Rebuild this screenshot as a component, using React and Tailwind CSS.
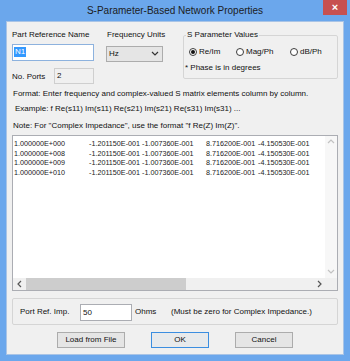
import React from "react";

const rows = ["1.000000E+000", "1.000000E+008", "1.000000E+009", "1.000000E+010"];

function Chevron({ dir, color }) {
  const d = {
    up: "M1 5 L4 2 L7 5",
    down: "M1 2 L4 5 L7 2",
    left: "M5 1 L2 4 L5 7",
    right: "M3 1 L6 4 L3 7",
  }[dir];
  return (
    <svg width="8" height="8" viewBox="0 0 8 8">
      <path d={d} fill="none" stroke={color} strokeWidth="1.2" />
    </svg>
  );
}

function Radio({ label, checked, width }) {
  return (
    <div className={`flex items-center ${width}`}>
      <span className="w-[8px] h-[8px] rounded-full border border-[#3c3c3c] bg-white flex items-center justify-center">
        {checked && <span className="w-[4px] h-[4px] rounded-full bg-[#111]" />}
      </span>
      <span className="ml-[2px]">{label}</span>
    </div>
  );
}

export default function App() {
  return (
    <div className="w-[350px] h-[361px] bg-[#6ba7ec] flex flex-col font-[family-name:'Liberation_Sans',Arial,sans-serif] text-[8px] text-[#111]">
      {/* title bar */}
      <div className="relative h-[21px] flex items-center justify-center">
        <span className="text-[10px] text-[#1c1c1c]">S-Parameter-Based Network Properties</span>
        <div className="absolute top-0 right-[3px] w-[24px] h-[15px] bg-[#c75050] flex items-center justify-center text-white text-[11px] font-bold leading-none">
          ×
        </div>
      </div>

      {/* client area */}
      <div className="mx-[6px] h-[334px] border border-[#a9c4e6] bg-[#f0f0f0] flex flex-col px-[5px] pt-[8px]">
        {/* top controls */}
        <div className="h-[54px] flex items-start">
          <div className="w-[82px] flex flex-col">
            <div className="leading-[9px] whitespace-nowrap">Part Reference Name</div>
            <div className="mt-[5px] h-[17px] border border-[#8db2de] bg-white flex items-start pl-[1px] pt-[1px]">
              <span className="mt-[1px] h-[10px] leading-[10px] px-[1px] bg-[#3399ff] text-white">N1</span>
            </div>
            <div className="mt-[7px] h-[16px] flex items-center">
              <span className="w-[42px] pt-[1px]">No. Ports</span>
              <div className="w-[40px] h-[16px] border border-[#cfcfcf] bg-[#f0f0f0] pl-[2px] pt-[2px] leading-[9px]">2</div>
            </div>
          </div>

          <div className="ml-[12px] w-[57px] flex flex-col">
            <div className="leading-[9px] pl-[1px] whitespace-nowrap">Frequency Units</div>
            <div className="mt-[7px] h-[16px] border border-[#acacac] bg-[#e5e5e5] flex items-center justify-between pl-[2px] pr-[3px]">
              <span>Hz</span>
              <Chevron dir="down" color="#333" />
            </div>
          </div>

          <fieldset className="ml-auto w-[155px] h-[49px] border border-[#d5d5d5] rounded-[2px] pl-[2px]">
            <legend className="px-[1px] leading-[10px]">S Parameter Values</legend>
            <div className="mt-[7px] pl-[3px] flex items-center leading-[10px]">
              <Radio label="Re/Im" checked width="w-[47px]" />
              <Radio label="Mag/Ph" width="w-[54px]" />
              <Radio label="dB/Ph" width="" />
            </div>
            <div className="mt-[6px] -ml-[1px] leading-[10px]">* Phase is in degrees</div>
          </fieldset>
        </div>

        {/* instructions */}
        <div className="mt-[5px] leading-[9px] pl-[1px] whitespace-nowrap">
          Format: Enter frequency and complex-valued S matrix elements column by column.
        </div>
        <div className="mt-[6px] leading-[9px] pl-[3px] whitespace-nowrap">
          Example: f Re(s11) Im(s11) Re(s21) Im(s21) Re(s31) Im(s31) ...
        </div>
        <div className="mt-[8px] leading-[9px] pl-[1px] whitespace-nowrap">
          Note: For "Complex Impedance", use the format "f Re(Z) Im(Z)".
        </div>

        {/* data list */}
        <div className="mt-[5px] h-[156px] border border-[#abadb3] bg-white flex flex-col">
          <div className="flex-1 flex">
            <div className="flex-1 pl-[1px] pt-[3px] text-[7.2px] leading-[9.67px] text-[#1a1a1a]">
              {rows.map((f) => (
                <div key={f} className="grid grid-cols-[75px_53px_64px_52px_auto] whitespace-nowrap">
                  <span>{f}</span>
                  <span>-1.201150E-001</span>
                  <span>-1.007360E-001</span>
                  <span>8.716200E-001</span>
                  <span>-4.150530E-001</span>
                </div>
              ))}
            </div>
            <div className="w-[12px] bg-[#f7f7f7] flex flex-col items-center justify-between py-[2px]">
              <Chevron dir="up" color="#c2c2c2" />
              <Chevron dir="down" color="#c2c2c2" />
            </div>
          </div>
          <div className="h-[12px] flex bg-[#f0f0f0]">
            <div className="w-[13px] flex items-center justify-center">
              <Chevron dir="left" color="#555" />
            </div>
            <div className="flex-1 flex items-stretch">
              <div className="w-[160px] bg-[#cdcdcd]" />
            </div>
            <div className="w-[13px] flex items-center justify-center">
              <Chevron dir="right" color="#555" />
            </div>
            <div className="w-[12px] bg-[#f0f0f0]" />
          </div>
        </div>

        {/* port reference impedance */}
        <div className="mt-[7px] h-[27px] border border-[#d5d5d5] rounded-[2px] flex items-center pl-[7px] pt-[1px]">
          <span className="w-[60px]">Port Ref. Imp.</span>
          <div className="w-[52px] h-[17px] border border-[#abadb3] bg-white pl-[2px] pt-[3px] leading-[9px]">50</div>
          <span className="ml-[3px] w-[36px]">Ohms</span>
          <span>(Must be zero for Complex Impedance.)</span>
        </div>

        {/* buttons */}
        <div className="mt-[7px] flex justify-center gap-[26px]">
          <button className="w-[68px] h-[16px] border border-[#acacac] bg-[#e5e5e5] leading-none">Load from File</button>
          <button className="w-[58px] h-[16px] border border-[#3c8ee0] bg-[#e8eaec] leading-none">OK</button>
          <button className="w-[58px] h-[16px] border border-[#acacac] bg-[#e5e5e5] leading-none">Cancel</button>
        </div>
      </div>
    </div>
  );
}
